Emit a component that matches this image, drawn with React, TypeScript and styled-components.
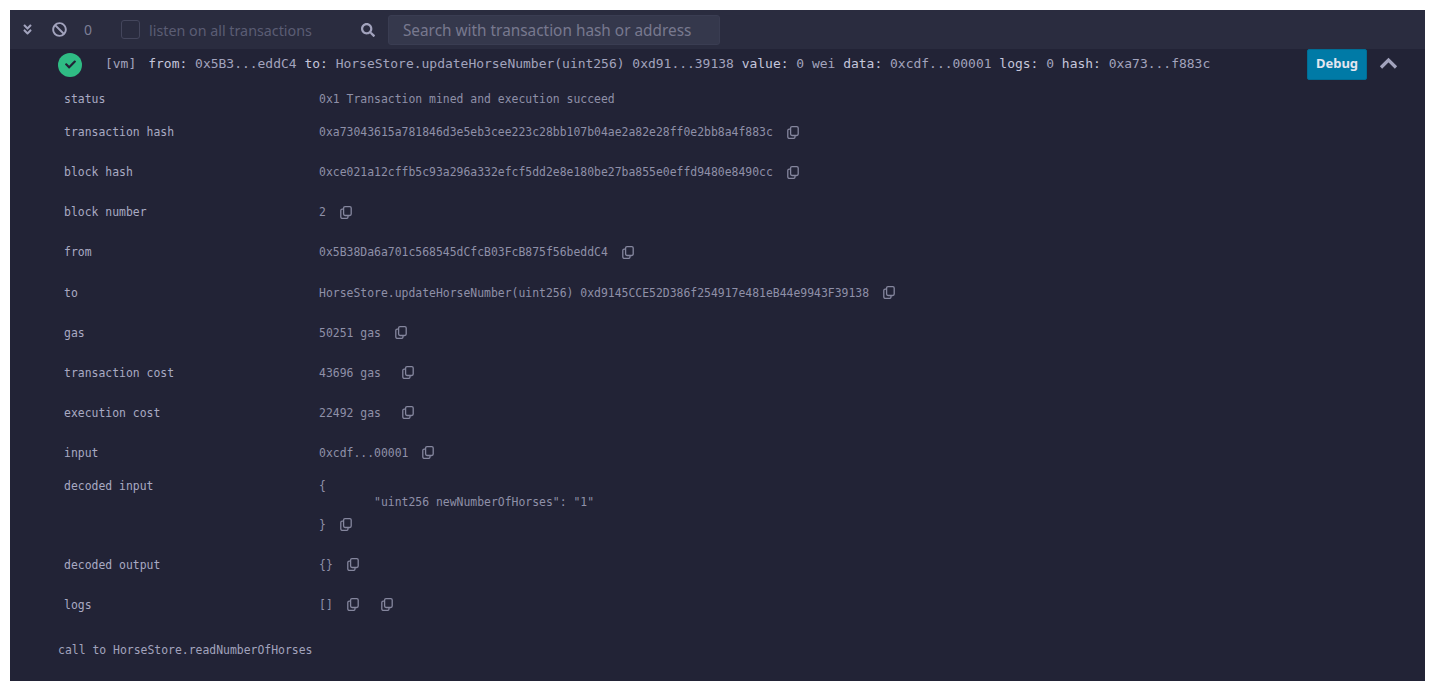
import React from 'react';
import styled, { createGlobalStyle } from 'styled-components';
import { FaAngleDoubleDown, FaBan, FaCheck, FaSearch } from 'react-icons/fa';

const GlobalStyle = createGlobalStyle`
  html, body {
    margin: 0;
    padding: 0;
    background: #ffffff;
  }
  body {
    font-family: "Noto Sans", sans-serif;
  }
`;

const Page = styled.div`
  padding: 10px 9px 10px 10px;
  height: 691px;
  box-sizing: border-box;
`;

const Terminal = styled.div`
  height: 671px;
  background: #222336;
  overflow: hidden;
`;

const Toolbar = styled.div`
  display: flex;
  align-items: center;
  height: 39px;
  background: #2a2c3f;
  color: #a2a3bd;
`;

const ToolbarButton = styled.span<{ $left: number }>`
  display: flex;
  margin-left: ${(p) => p.$left}px;
`;

const Count = styled.span`
  margin-left: 17px;
  font-size: 14px;
  color: #7c7e95;
`;

const Checkbox = styled.span`
  width: 17px;
  height: 17px;
  margin-left: 29px;
  border: 1px solid #44465c;
  border-radius: 3px;
  background: #2a2c3f;
`;

const ListenLabel = styled.span`
  margin-left: 9px;
  padding-top: 1px;
  font-size: 14.3px;
  color: #5b5d74;
`;

const SearchBox = styled.div`
  width: 332px;
  height: 30px;
  margin-left: 13px;
  padding: 1px 0 0 14px;
  box-sizing: border-box;
  display: flex;
  align-items: center;
  background: #35384c;
  border: 1px solid #3a3d52;
  border-radius: 3px;
  font-size: 15.36px;
  color: #78798f;
`;

const Summary = styled.div`
  position: relative;
  display: flex;
  align-items: center;
  height: 31px;
  padding-left: 48px;
`;

const StatusDot = styled.span`
  width: 24px;
  height: 24px;
  border-radius: 50%;
  background: #2fbc84;
  color: #222336;
  display: flex;
  align-items: center;
  justify-content: center;
`;

const SummaryText = styled.div`
  margin-left: 23px;
  padding-bottom: 2px;
  font-family: "DejaVu Sans Mono", monospace;
  font-size: 12.97px;
  color: #a2a3bd;
  white-space: pre;
`;

const Strong = styled.span`
  color: #c5c6dc;
`;

const FromLabel = styled(Strong)`
  margin-left: 12px;
`;

const DebugButton = styled.button`
  position: absolute;
  left: 1297px;
  top: 0;
  width: 60px;
  height: 31px;
  padding: 0 0 3px;
  border: 1px solid #006d94;
  border-radius: 2px;
  background: #007aa6;
  color: #e4e6f0;
  font-family: "Noto Sans", sans-serif;
  font-size: 13px;
  font-weight: 700;
`;

const Collapse = styled.svg`
  position: absolute;
  left: 1369px;
  top: 8px;
  width: 19px;
  height: 12px;
  fill: none;
  stroke: #a2a3bd;
  stroke-width: 3.2;
`;

const Rows = styled.div`
  padding: 6px 0 0 54px;
  font-family: "DejaVu Sans Mono", monospace;
  font-size: 11.43px;
  color: #8f90a8;
`;

const Row = styled.div<{ $height: number }>`
  display: grid;
  grid-template-columns: 255px 1fr;
  align-items: center;
  height: ${(p) => p.$height}px;
`;

const Label = styled.span`
  color: #a9aac3;
`;

const Value = styled.div`
  display: flex;
  align-items: center;
  white-space: pre;
`;

const CopyIcon = styled.svg<{ $gap: number }>`
  width: 12px;
  height: 13px;
  margin-left: ${(p) => p.$gap}px;
  fill: none;
  stroke: #85869e;
  stroke-width: 1.3;
  flex: none;
`;

const DecodedBlock = styled.div`
  display: grid;
  grid-template-columns: 255px 1fr;
  height: 72px;
  padding-top: 5px;
  box-sizing: border-box;
`;

const DecodedLabel = styled(Label)`
  padding-top: 1px;
`;

const DecodedLines = styled.div`
  display: flex;
  flex-direction: column;
`;

const DecodedLine = styled.div<{ $height: number }>`
  display: flex;
  align-items: center;
  height: ${(p) => p.$height}px;
  white-space: pre;
`;

const Indented = styled.span`
  margin-left: 55px;
`;

const CallLine = styled.div`
  padding: 18px 0 0 48px;
  font-family: "DejaVu Sans Mono", monospace;
  font-size: 11.43px;
  color: #a2a3bd;
`;

function Copy({ gap = 14 }: { gap?: number }) {
  return (
    <CopyIcon $gap={gap} viewBox="0 0 12 13">
      <rect x="3.6" y="0.7" width="7.6" height="8.8" rx="1.4" />
      <path d="M3.6 3.2H2.2C1.4 3.2.8 3.8.8 4.6v6.4c0 .8.6 1.4 1.4 1.4h4.4c.8 0 1.4-.6 1.4-1.4V9.5" />
    </CopyIcon>
  );
}

const rows: { label: string; value: string; height: number }[] = [
  { label: 'transaction hash', value: '0xa73043615a781846d3e5eb3cee223c28bb107b04ae2a82e28ff0e2bb8a4f883c', height: 40 },
  { label: 'block hash', value: '0xce021a12cffb5c93a296a332efcf5dd2e8e180be27ba855e0effd9480e8490cc', height: 40 },
  { label: 'block number', value: '2', height: 40.3 },
  { label: 'from', value: '0x5B38Da6a701c568545dCfcB03FcB875f56beddC4', height: 40.3 },
  { label: 'to', value: 'HorseStore.updateHorseNumber(uint256) 0xd9145CCE52D386f254917e481eB44e9943F39138', height: 40.3 },
  { label: 'gas', value: '50251 gas', height: 40 },
  { label: 'transaction cost', value: '43696 gas ', height: 39.6 },
  { label: 'execution cost', value: '22492 gas ', height: 40.4 },
  { label: 'input', value: '0xcdf...00001', height: 40 },
];

export default function App() {
  return (
    <>
      <GlobalStyle />
      <Page>
        <Terminal>
          <Toolbar>
            <ToolbarButton $left={11}><FaAngleDoubleDown size={13} /></ToolbarButton>
            <ToolbarButton $left={18}><FaBan size={15} /></ToolbarButton>
            <Count>0</Count>
            <Checkbox />
            <ListenLabel>listen on all transactions</ListenLabel>
            <ToolbarButton $left={49}><FaSearch size={14} /></ToolbarButton>
            <SearchBox>Search with transaction hash or address</SearchBox>
          </Toolbar>
          <Summary>
            <StatusDot><FaCheck size={11} /></StatusDot>
            <SummaryText>
              [vm]<FromLabel>from:</FromLabel> 0x5B3...eddC4 <Strong>to:</Strong> HorseStore.updateHorseNumber(uint256) 0xd91...39138 <Strong>value:</Strong> 0 wei <Strong>data:</Strong> 0xcdf...00001 <Strong>logs:</Strong> 0 <Strong>hash:</Strong> 0xa73...f883c
            </SummaryText>
            <DebugButton>Debug</DebugButton>
            <Collapse viewBox="0 0 19 12"><path d="M2 10.5 9.5 3 17 10.5" /></Collapse>
          </Summary>
          <Rows>
            <Row $height={26}>
              <Label>status</Label>
              <Value>0x1 Transaction mined and execution succeed</Value>
            </Row>
            {rows.map((r) => (
              <Row key={r.label} $height={r.height}>
                <Label>{r.label}</Label>
                <Value>{r.value}<Copy /></Value>
              </Row>
            ))}
            <DecodedBlock>
              <DecodedLabel>decoded input</DecodedLabel>
              <DecodedLines>
                <DecodedLine $height={16}>{'{'}</DecodedLine>
                <DecodedLine $height={16}><Indented>"uint256 newNumberOfHorses": "1"</Indented></DecodedLine>
                <DecodedLine $height={30}>{'}'}<Copy /></DecodedLine>
              </DecodedLines>
            </DecodedBlock>
            <Row $height={40}>
              <Label>decoded output</Label>
              <Value>{'{}'}<Copy /></Value>
            </Row>
            <Row $height={40}>
              <Label>logs</Label>
              <Value>[]<Copy /><Copy gap={22} /></Value>
            </Row>
          </Rows>
          <CallLine>call to HorseStore.readNumberOfHorses</CallLine>
        </Terminal>
      </Page>
    </>
  );
}
